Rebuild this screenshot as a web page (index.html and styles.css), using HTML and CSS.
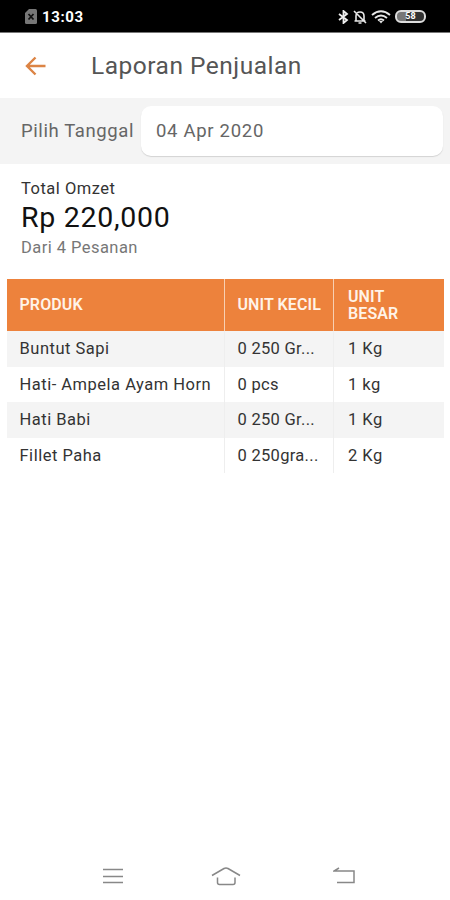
FILE: index.html
```html
<!DOCTYPE html>
<html lang="id">
<head>
  <meta charset="UTF-8">
  <meta name="viewport" content="width=device-width, initial-scale=1">
  <title>Laporan Penjualan</title>
  <link rel="stylesheet" href="styles.css">
</head>
<body>
  <div class="statusbar">
    <svg class="sim" width="12" height="15" viewBox="0 0 12 15">
      <path d="M4 0h6.500q1.500 0 1.500 1.500v12q0 1.500-1.500 1.500h-9q-1.500 0-1.500-1.500V4z" fill="#777"/>
      <path d="M3.500 5l5 5.500M8.500 5l-5 5.500" stroke="#111" stroke-width="1.800"/>
    </svg>
    <span class="time">13:03</span>
    <div class="status-icons">
      <svg width="11" height="14" viewBox="0 0 11 14" fill="none" stroke="#f0f0f0" stroke-width="1.800">
        <path d="M1 4l8 6-3.500 3V1L9 4l-8 6"/>
      </svg>
      <svg width="14" height="14" viewBox="0 0 14 14" fill="none" stroke="#e8e8e8" stroke-width="1.600">
        <path d="M3 10.500V6q0-4 4-4t4 4v4.500M1.500 11h11M5.500 13h3M1 1l12 12"/>
      </svg>
      <svg width="20" height="14" viewBox="0 0 20 14" fill="none" stroke="#e8e8e8" stroke-width="1.900">
        <path d="M1 5q9-7.500 18 0M4 8q6-5 12 0M7 10.500q3-2.500 6 0"/>
        <path d="M8 11h4l-2 2.500z" fill="#e8e8e8" stroke="none"/>
      </svg>
      <div class="battery"><span>58</span></div>
    </div>
  </div>

  <header class="appbar">
    <svg width="22" height="20" viewBox="0 0 22 20" fill="none" stroke="#dc8445" stroke-width="2.400">
      <path d="M20.500 10H2.500M10.500 1.500L2 10l8.500 8.500"/>
    </svg>
    <h1>Laporan Penjualan</h1>
  </header>

  <div class="filter">
    <label class="filter-label">Pilih Tanggal</label>
    <div class="date">04 Apr 2020</div>
  </div>

  <section class="summary">
    <div class="summary-title">Total Omzet</div>
    <div class="summary-value">Rp 220,000</div>
    <div class="summary-note">Dari 4 Pesanan</div>
  </section>

  <table class="report">
    <thead>
      <tr><th class="col-product">PRODUK</th><th class="col-small">UNIT KECIL</th><th class="col-big">UNIT BESAR</th></tr>
    </thead>
    <tbody>
      <tr><td>Buntut Sapi</td><td>0 250 Gr...</td><td>1 Kg</td></tr>
      <tr><td>Hati- Ampela Ayam Horn</td><td>0 pcs</td><td>1 kg</td></tr>
      <tr><td>Hati Babi</td><td>0 250 Gr...</td><td>1 Kg</td></tr>
      <tr><td>Fillet Paha</td><td>0 250gra...</td><td>2 Kg</td></tr>
    </tbody>
  </table>

  <nav class="navbar">
    <svg width="22" height="20" viewBox="0 0 22 20"><path d="M1 3.500h20M1 10.500h20M1 16.500h20"/></svg>
    <svg width="30" height="20" viewBox="0 0 30 20"><path d="M1 9.500L13 2.500q2-1 4 0l12 7M6.500 11.500v5q0 2 2 2h13.500q2 0 2-2v-5"/></svg>
    <svg width="22" height="20" viewBox="0 0 22 20"><path d="M6 2L1 5h20v11.500H4"/></svg>
  </nav>
</body>
</html>
```
FILE: styles.css
```css
* { box-sizing: border-box; }
body { margin: 0; height: 900px; display: flex; flex-direction: column; background: #fff; color: #333; font-family: Roboto, "Liberation Sans", sans-serif; overflow: hidden; }

.statusbar { height: 33px; flex: none; display: flex; align-items: center; padding: 1px 24px 0 25px; background: #000; border-bottom: 1px solid #777; color: #fff; }
.time { margin-left: 5px; font-size: 15px; font-weight: 700; letter-spacing: 0.6px; }
.status-icons { margin-left: auto; display: flex; align-items: center; gap: 4px; }
.battery { width: 31px; height: 13px; border: 2px solid #ddd; border-radius: 6px; background: linear-gradient(90deg, #777 35%, #333 35%); font-size: 9px; font-weight: 700; line-height: 9px; text-align: center; }

.appbar { height: 65px; flex: none; display: flex; align-items: center; padding-left: 25px; }
.appbar h1 { margin: 0 0 0 44px; font-size: 24.5px; font-weight: 400; letter-spacing: 0.5px; color: #555; }

.filter { height: 66px; flex: none; display: flex; align-items: center; padding: 0 7px 0 21px; background: #f4f4f4; }
.filter-label { width: 120px; font-size: 18.5px; letter-spacing: 0.6px; color: #666; }
.date { flex: 1; height: 50px; padding-left: 15px; line-height: 50px; background: #fff; border-radius: 10px; box-shadow: 0 1px 1px #d3d3d3; font-size: 18.5px; letter-spacing: 0.7px; color: #666; }

.summary { height: 115px; flex: none; padding: 15px 21px 0; }
.summary-title { font-size: 16.5px; line-height: 20px; letter-spacing: 0.5px; color: #333; }
.summary-value { font-size: 28.5px; line-height: 37px; letter-spacing: 0.7px; color: #111; }
.summary-note { font-size: 16.5px; line-height: 23px; letter-spacing: 0.45px; color: #777; }

.report { width: 437px; margin-left: 7px; border-collapse: separate; border-spacing: 0; table-layout: fixed; }
.report th, .report td { padding: 0 12.5px; text-align: left; white-space: nowrap; border-right: 1px solid #eee; }
.report th:last-child, .report td:last-child { border-right: 0; padding-left: 14px; }
.report th { height: 52px; padding-bottom: 1px; background: #ed823c; border-color: #f8cfb2; color: #fff3e8; font-size: 16px; font-weight: 600; line-height: 17px; letter-spacing: 0.1px; }
.report .col-big { white-space: normal; padding-right: 40px; }
.report td { height: 35.5px; font-size: 16.5px; letter-spacing: 0.5px; }
.report td:nth-child(2) { letter-spacing: 0.3px; }
.report tbody tr:nth-child(odd) { background: #f4f4f4; }
.col-product { width: 218px; }
.col-small { width: 109px; }

.navbar { height: 48px; flex: none; margin-top: auto; padding-left: 102px; display: flex; gap: 92px; align-items: center; }
.navbar svg { fill: none; stroke: #888; stroke-width: 1.5; }
.navbar svg:nth-child(2) { margin-left: -5px; }
```
